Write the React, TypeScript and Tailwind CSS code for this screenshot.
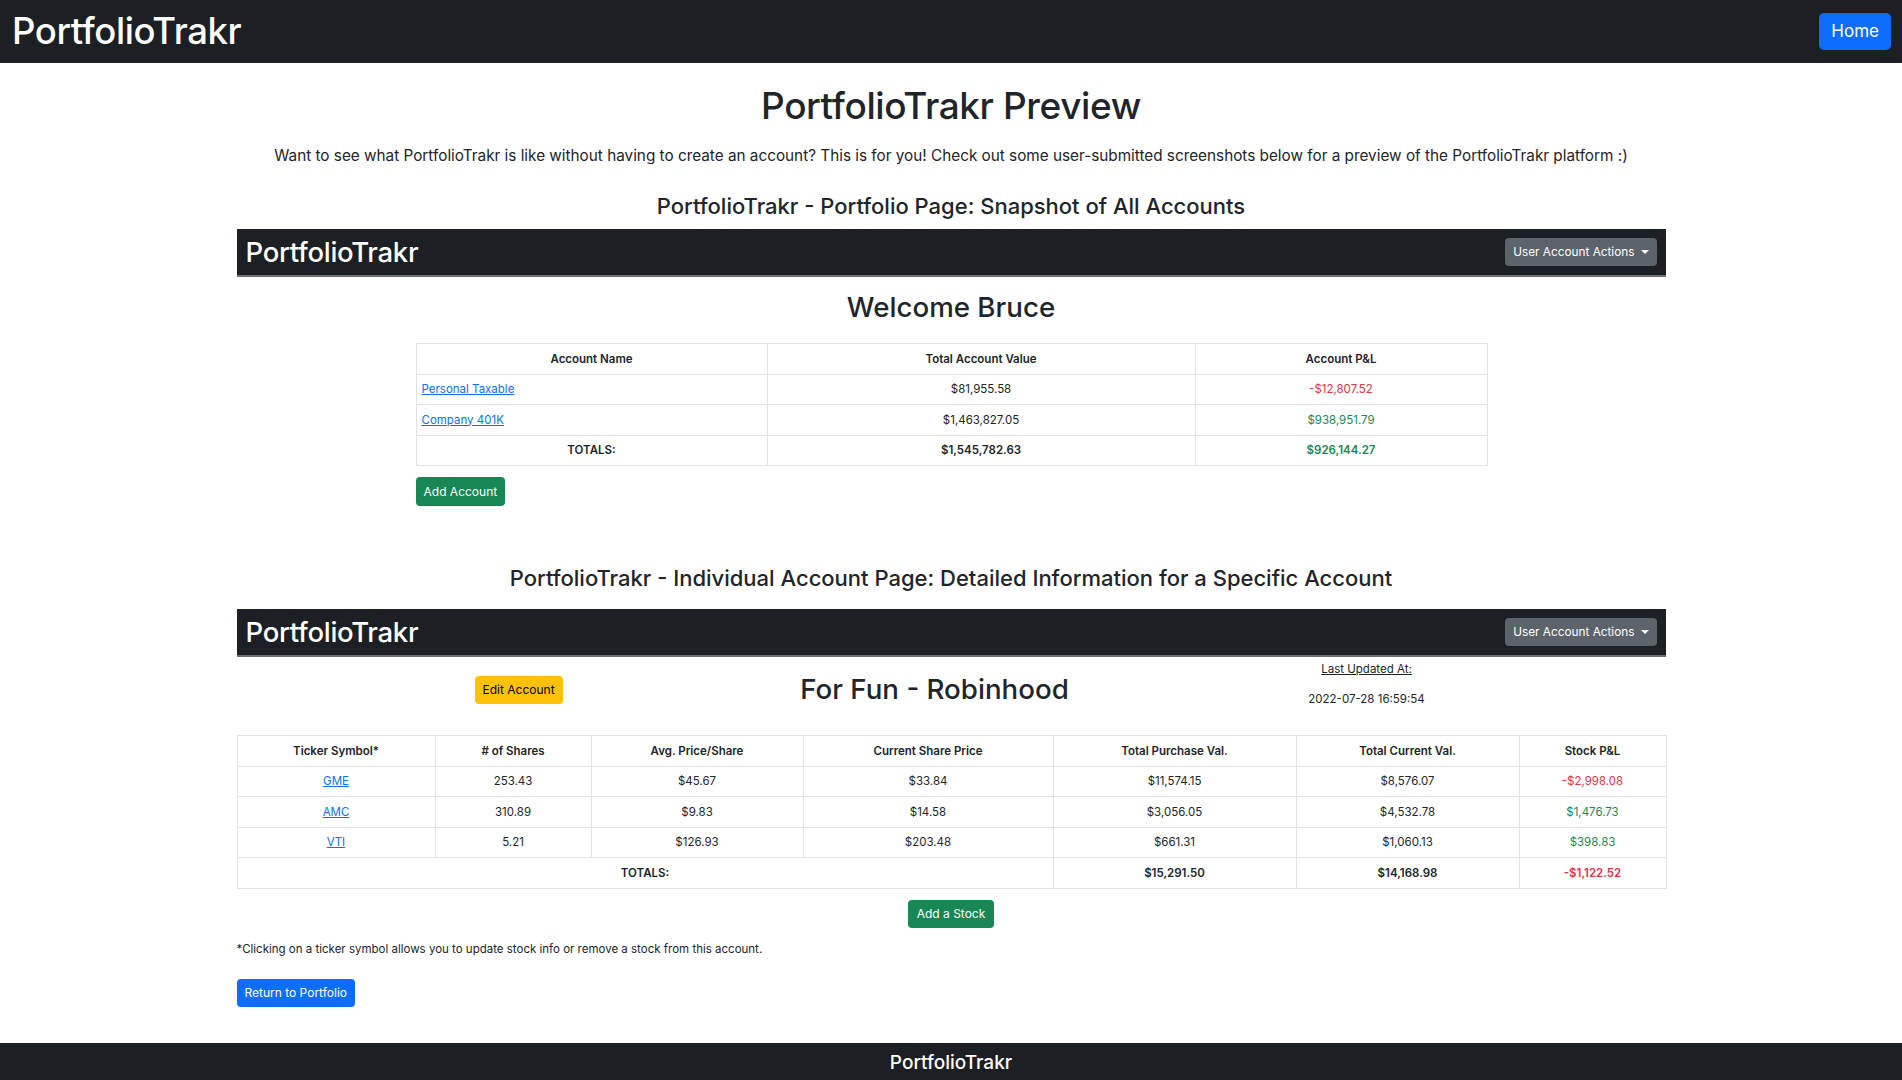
import React from "react";

function Caret() {
  return <span className="ml-[6px] inline-block h-0 w-0 border-x-[4px] border-t-[4px] border-x-transparent border-t-white align-middle" />;
}

function MiniNav() {
  return (
    <div className="flex h-[48px] items-center justify-between border-b-[2px] border-[#6c6f73] bg-[#1c1f23] pl-[9px] pr-[9px]">
      <span className="text-[27.5px] font-medium leading-none tracking-[-0.3px] text-white">PortfolioTrakr</span>
      <button className="flex h-[28px] items-center rounded-[4px] bg-[#5c636a] px-[8px] text-[11.8px] text-white">
        User Account Actions
        <Caret />
      </button>
    </div>
  );
}

const td = "border border-[#dee2e6] h-[30.5px] px-[6px] text-center";

export default function App() {
  const stocks = [
    ["GME", "253.43", "$45.67", "$33.84", "$11,574.15", "$8,576.07", "-$2,998.08", "r"],
    ["AMC", "310.89", "$9.83", "$14.58", "$3,056.05", "$4,532.78", "$1,476.73", "g"],
    ["VTI", "5.21", "$126.93", "$203.48", "$661.31", "$1,060.13", "$398.83", "g"],
  ];
  return (
    <div className="min-h-[1080px] bg-white font-[Inter,'Liberation_Sans',sans-serif] text-[#212529]">
      <nav className="flex h-[63px] items-center justify-between bg-[#1c1f23] pl-[12px] pr-[11px]">
        <span className="text-[36.5px] font-medium leading-none tracking-[-0.4px] text-white">PortfolioTrakr</span>
        <button className="h-[37px] rounded-[5px] bg-[#0d6efd] px-[12px] text-[17px] text-white">Home</button>
      </nav>

      <div className="flex flex-col items-center">
        <h1 className="mt-[21px] text-[37px] font-medium leading-[1.2] tracking-[-0.4px]">PortfolioTrakr Preview</h1>
        <p className="mt-[16px] text-[15.3px] leading-[24px]">
          Want to see what PortfolioTrakr is like without having to create an account? This is for you! Check out some user-submitted screenshots below for a preview of the PortfolioTrakr platform :)
        </p>
        <h3 className="mt-[24px] text-[22px] font-medium leading-[29px]">PortfolioTrakr - Portfolio Page: Snapshot of All Accounts</h3>

        <div className="mt-[8px] w-[1429px]">
          <MiniNav />
          <div className="flex flex-col items-center">
            <h2 className="mt-[12px] text-[27.7px] font-medium leading-[36px]">Welcome Bruce</h2>
            <div className="mt-[18px] w-[1071px] text-[11.5px]">
              <table className="w-full table-fixed border-collapse border border-[#dee2e6]">
                <colgroup>
                  <col className="w-[351px]" />
                  <col className="w-[428px]" />
                  <col className="w-[292px]" />
                </colgroup>
                <thead>
                  <tr>
                    <th className={td + " font-semibold"}>Account Name</th>
                    <th className={td + " font-semibold"}>Total Account Value</th>
                    <th className={td + " font-semibold"}>Account P&amp;L</th>
                  </tr>
                </thead>
                <tbody>
                  <tr>
                    <td className="h-[30.5px] border border-[#dee2e6] px-[5px] text-left"><a className="text-[#0d6efd] underline">Personal Taxable</a></td>
                    <td className={td}>$81,955.58</td>
                    <td className={td + " text-[#dc3545]"}>-$12,807.52</td>
                  </tr>
                  <tr>
                    <td className="h-[30.5px] border border-[#dee2e6] px-[5px] text-left"><a className="text-[#0d6efd] underline">Company 401K</a></td>
                    <td className={td}>$1,463,827.05</td>
                    <td className={td + " text-[#198754]"}>$938,951.79</td>
                  </tr>
                  <tr className="font-semibold">
                    <td className={td}>TOTALS:</td>
                    <td className={td}>$1,545,782.63</td>
                    <td className={td + " text-[#198754]"}>$926,144.27</td>
                  </tr>
                </tbody>
              </table>
              <button className="mt-[11px] h-[29px] rounded-[4px] bg-[#198754] px-[8px] text-[12px] text-white">Add Account</button>
            </div>
          </div>
        </div>

        <h3 className="mt-[58px] text-[22px] font-medium leading-[29px]">PortfolioTrakr - Individual Account Page: Detailed Information for a Specific Account</h3>

        <div className="mt-[16px] w-[1429px]">
          <MiniNav />
          <div className="grid h-[78px] grid-cols-[476px_444px_420px_1fr] items-start">
            <div className="pl-[238px] pt-[19px]">
              <button className="h-[28px] rounded-[4px] bg-[#ffc107] px-[8px] text-[12px] text-black">Edit Account</button>
            </div>
            <div className="pt-[14px] text-center text-[27.7px] font-medium leading-[36px]">For Fun - Robinhood</div>
            <div className="pt-[3px] text-center text-[11.5px] leading-[18px]">
              <div className="underline">Last Updated At:</div>
              <div className="mt-[12px]">2022-07-28 16:59:54</div>
            </div>
            <div />
          </div>
          <table className="w-full table-fixed border-collapse border border-[#dee2e6] text-[11.5px]">
            <colgroup>
              <col className="w-[198px]" />
              <col className="w-[156px]" />
              <col className="w-[212px]" />
              <col className="w-[250px]" />
              <col className="w-[243px]" />
              <col className="w-[223px]" />
              <col className="w-[147px]" />
            </colgroup>
            <thead>
              <tr>
                {["Ticker Symbol*", "# of Shares", "Avg. Price/Share", "Current Share Price", "Total Purchase Val.", "Total Current Val.", "Stock P&L"].map((h) => (
                  <th key={h} className={td + " font-semibold"}>{h}</th>
                ))}
              </tr>
            </thead>
            <tbody>
              {stocks.map((s) => (
                <tr key={s[0]}>
                  <td className={td}><a className="text-[#0d6efd] underline">{s[0]}</a></td>
                  <td className={td}>{s[1]}</td>
                  <td className={td}>{s[2]}</td>
                  <td className={td}>{s[3]}</td>
                  <td className={td}>{s[4]}</td>
                  <td className={td}>{s[5]}</td>
                  <td className={td + (s[7] === "r" ? " text-[#dc3545]" : " text-[#198754]")}>{s[6]}</td>
                </tr>
              ))}
              <tr className="font-semibold">
                <td colSpan={4} className={td}>TOTALS:</td>
                <td className={td}>$15,291.50</td>
                <td className={td}>$14,168.98</td>
                <td className={td + " text-[#dc3545]"}>-$1,122.52</td>
              </tr>
            </tbody>
          </table>
          <div className="mt-[11px] flex justify-center">
            <button className="h-[28px] rounded-[4px] bg-[#198754] px-[9px] text-[12px] text-white">Add a Stock</button>
          </div>
          <p className="mt-[12px] text-[11.5px] leading-[18px]">*Clicking on a ticker symbol allows you to update stock info or remove a stock from this account.</p>
          <button className="mt-[21px] h-[28px] rounded-[4px] bg-[#0d6efd] px-[8px] text-[12px] text-white">Return to Portfolio</button>
        </div>
      </div>

      <footer className="mt-[36px] flex h-[40px] items-start justify-center bg-[#1c1f23] pt-[6px]">
        <span className="text-[19px] font-medium text-white">PortfolioTrakr</span>
      </footer>
    </div>
  );
}
